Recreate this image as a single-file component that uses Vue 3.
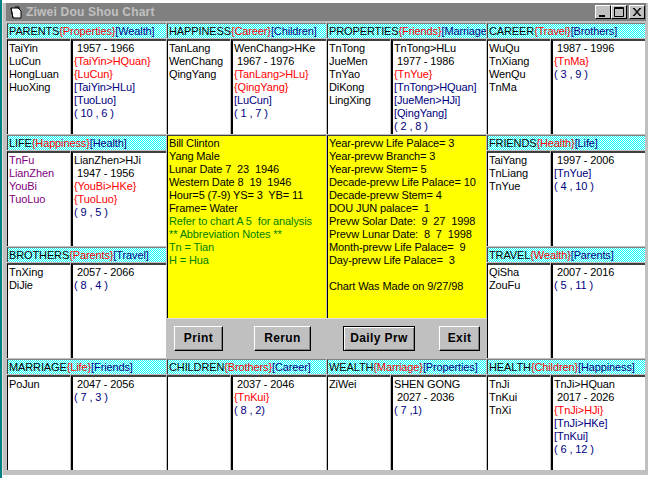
<script setup>
// k = black, r = red, b = navy
const palaces = [
  { name: 'PARENTS', a: 'Properties', b: 'Wealth', stars: ['TaiYin', 'LuCun', 'HongLuan', 'HuoXing'],
    info: [['k', ' 1957 - 1966'], ['r', '{TaiYin>HQuan}'], ['r', '{LuCun}'], ['b', '[TaiYin>HLu]'], ['b', '[TuoLuo]'], ['b', '( 10 , 6 )']] },
  { name: 'HAPPINESS', a: 'Career', b: 'Children', stars: ['TanLang', 'WenChang', 'QingYang'],
    info: [['k', 'WenChang>HKe'], ['k', ' 1967 - 1976'], ['r', '{TanLang>HLu}'], ['r', '{QingYang}'], ['b', '[LuCun]'], ['b', '( 1 , 7 )']] },
  { name: 'PROPERTIES', a: 'Friends', b: 'Marriage', stars: ['TnTong', 'JueMen', 'TnYao', 'DiKong', 'LingXing'],
    info: [['k', 'TnTong>HLu'], ['k', ' 1977 - 1986'], ['r', '{TnYue}'], ['b', '[TnTong>HQuan]'], ['b', '[JueMen>HJi]'], ['b', '[QingYang]'], ['b', '( 2 , 8 )']] },
  { name: 'CAREER', a: 'Travel', b: 'Brothers', stars: ['WuQu', 'TnXiang', 'WenQu', 'TnMa'],
    info: [['k', ' 1987 - 1996'], ['r', '{TnMa}'], ['b', '( 3 , 9 )']] },
  { name: 'LIFE', a: 'Happiness', b: 'Health', self: true, stars: ['TnFu', 'LianZhen', 'YouBi', 'TuoLuo'],
    info: [['k', 'LianZhen>HJi'], ['k', ' 1947 - 1956'], ['r', '{YouBi>HKe}'], ['r', '{TuoLuo}'], ['b', '( 9 , 5 )']] },
  { center: true },
  { name: 'FRIENDS', a: 'Health', b: 'Life', stars: ['TaiYang', 'TnLiang', 'TnYue'],
    info: [['k', ' 1997 - 2006'], ['b', '[TnYue]'], ['b', '( 4 , 10 )']] },
  { name: 'BROTHERS', a: 'Parents', b: 'Travel', stars: ['TnXing', 'DiJie'],
    info: [['k', ' 2057 - 2066'], ['b', '( 8 , 4 )']] },
  { name: 'TRAVEL', a: 'Wealth', b: 'Parents', stars: ['QiSha', 'ZouFu'],
    info: [['k', ' 2007 - 2016'], ['b', '( 5 , 11 )']] },
  { name: 'MARRIAGE', a: 'Life', b: 'Friends', stars: ['PoJun'],
    info: [['k', ' 2047 - 2056'], ['b', '( 7 , 3 )']] },
  { name: 'CHILDREN', a: 'Brothers', b: 'Career', stars: [],
    info: [['k', ' 2037 - 2046'], ['r', '{TnKui}'], ['b', '( 8 , 2)']] },
  { name: 'WEALTH', a: 'Marriage', b: 'Properties', stars: ['ZiWei'],
    info: [['k', 'SHEN GONG'], ['k', ' 2027 - 2036'], ['b', '( 7 ,1)']] },
  { name: 'HEALTH', a: 'Children', b: 'Happiness', stars: ['TnJi', 'TnKui', 'TnXi'],
    info: [['k', 'TnJi>HQuan'], ['k', ' 2017 - 2026'], ['r', '{TnJi>HJi}'], ['b', '[TnJi>HKe]'], ['b', '[TnKui]'], ['b', '( 6 , 12 )']] }
]

const birthInfo = ['Bill Clinton', 'Yang Male', 'Lunar Date 7  23  1946', 'Western Date 8  19  1946', 'Hour=5 (7-9) YS= 3  YB= 11', 'Frame= Water']
const notes = ['Refer to chart A 5  for analysis', '** Abbreviation Notes **', 'Tn = Tian', 'H = Hua']
const preview = [
  'Year-prevw Life Palace= 3', 'Year-prevw Branch= 3', 'Year-prevw Stem= 5', 'Decade-prevw Life Palace= 10',
  'Decade-prevw Stem= 4', 'DOU JUN palace=  1', 'Prevw Solar Date:  9  27  1998', 'Prevw Lunar Date:  8  7  1998',
  'Month-prevw Life Palace=  9', 'Day-prevw Life Palace=  3', ' ', 'Chart Was Made on 9/27/98'
]
</script>

<template>
  <div class="desktop">
    <div class="window">
      <div class="titlebar">
        <svg class="app-icon" width="13" height="13" viewBox="0 0 13 13">
          <path d="M1 2h7l3 3v7H3z" fill="#fff" stroke="#000" />
          <path d="M1 2l2 10M5 1h4v2" fill="none" stroke="#000" />
        </svg>
        <span class="title">Ziwei  Dou Shou Chart</span>
        <div class="win-btns">
          <button class="win-btn">
            <svg width="12" height="10" viewBox="0 0 12 10"><path d="M2 8h6v2H2z" fill="#000" /></svg>
          </button>
          <button class="win-btn">
            <svg width="12" height="10" viewBox="0 0 12 10"><path d="M1.5 .5h9v9h-9zM1 1.5h10" fill="none" stroke="#000" /></svg>
          </button>
          <button class="win-btn close">
            <svg width="12" height="10" viewBox="0 0 12 10"><path d="M2 1l7 8M3 1l7 8M9 1l-7 8M10 1l-7 8" fill="none" stroke="#000" /></svg>
          </button>
        </div>
      </div>

      <div class="chart">
        <template v-for="p in palaces" :key="p.name || 'center'">
          <div v-if="p.center" class="center">
            <div class="panels">
              <div class="panel">
                <div v-for="l in birthInfo" :key="l" class="line">{{ l }}</div>
                <div v-for="l in notes" :key="l" class="line green">{{ l }}</div>
              </div>
              <div class="panel">
                <div v-for="(l, i) in preview" :key="i" class="line">{{ l }}</div>
              </div>
            </div>
            <div class="actions">
              <button class="btn print">Print</button>
              <button class="btn rerun">Rerun</button>
              <button class="btn daily">Daily Prw</button>
              <button class="btn exit">Exit</button>
            </div>
          </div>
          <div v-else class="palace">
            <div class="head">{{ p.name }}<span class="r">{{ '{' + p.a + '}' }}</span><span class="b">[{{ p.b }}]</span></div>
            <div class="body">
              <div class="sub" :class="{ purple: p.self }">
                <div v-for="s in p.stars" :key="s" class="line">{{ s }}</div>
              </div>
              <div class="sub">
                <div v-for="(l, i) in p.info" :key="i" class="line" :class="l[0]">{{ l[1] }}</div>
              </div>
            </div>
          </div>
        </template>
      </div>
    </div>
  </div>
</template>

<style>
html, body {
  margin: 0;
  background: #fff;
}
</style>

<style scoped>
.desktop {
  width: 651px;
  height: 478px;
  overflow: hidden;
  position: relative;
  background: linear-gradient(90deg, #008080 2px, #fff 2px);
  padding-top: 3px;
  box-sizing: border-box;
  font-family: "Liberation Sans", Arial, sans-serif;
  font-size: 11px;
  letter-spacing: -0.12px;
  color: #000;
}

.window {
  margin-left: 2px;
  width: 646px;
  height: 472px;
  background: #c0c0c0;
  padding: 0 2px 0 4px;
  box-sizing: border-box;
  border-left: 1px solid #dfdfdf;
}

.titlebar {
  height: 18px;
  margin-left: -1px;
  background: #808080;
  display: flex;
  align-items: center;
  padding: 0 1px 0 4px;
}

.app-icon {
  flex: none;
}

.title {
  margin-left: 3px;
  color: #c0c0c0;
  font-weight: bold;
  font-size: 12px;
  letter-spacing: 0.2px;
  white-space: pre;
}

.win-btns {
  margin-left: auto;
  display: flex;
}

.win-btn {
  width: 16px;
  height: 14px;
  padding: 0;
  margin: 0;
  display: flex;
  align-items: center;
  justify-content: center;
  background: #c0c0c0;
  border: 1px solid;
  border-color: #fff #000 #000 #fff;
}

.win-btn.close {
  margin-left: 2px;
}

.chart {
  margin-top: 2px;
  display: grid;
  grid-template-columns: 160px 160px 160px 159px;
  grid-template-rows: repeat(4, 112px);
}

.palace {
  display: flex;
  flex-direction: column;
  min-width: 0;
}

/* cyan and white dither, one pixel squares */
.head {
  height: 14px;
  line-height: 14px;
  white-space: nowrap;
  overflow: hidden;
  padding-left: 1px;
  margin-right: 1px;
  border-top: 1px solid #808080;
  border-left: 1px solid #404040;
  background-color: cyan;
  background-image: repeating-conic-gradient(white 0 90deg, cyan 90deg 180deg);
  background-size: 2px 2px;
  image-rendering: pixelated;
}

.r {
  color: #f00;
}

.b {
  color: #000080;
}

.body {
  flex: 1;
  min-height: 0;
  display: grid;
  grid-template-columns: 63px 1fr;
  gap: 1px;
  margin: 1px 1px 1px 0;
}

.sub {
  background: #fff;
  border-top: 2px solid #404040;
  border-left: 1px solid #000;
  padding: 1px 0 0 1px;
  min-width: 0;
  overflow: hidden;
}

.sub + .sub {
  border-left-width: 2px;
}

.line {
  height: 13px;
  line-height: 13px;
  white-space: pre;
}

.purple {
  color: #800080;
}

.k {
  color: #000;
}

.center {
  grid-column: 2 / 4;
  grid-row: 2 / 4;
  display: flex;
  flex-direction: column;
}

.panels {
  height: 183px;
  display: grid;
  grid-template-columns: 160px 160px;
}

.panel {
  background: #ff0;
  border-top: 1px solid #404040;
  border-left: 1px solid #000;
  margin-right: 1px;
  padding: 1px 0 0 1px;
  overflow: hidden;
}

.green {
  color: #008000;
}

.actions {
  flex: 1;
  display: flex;
  align-items: center;
  padding: 0 0 2px 7px;
  border-top: 1px solid #dfdfdf;
}

.btn {
  height: 25px;
  padding: 0;
  font: bold 12px "Liberation Sans", Arial, sans-serif;
  letter-spacing: 0.4px;
  color: #000;
  background: #c0c0c0;
  border: 1px solid;
  border-color: #fff #000 #000 #fff;
  box-shadow: inset -1px -1px 0 #808080;
}

.print {
  width: 49px;
}

.rerun {
  width: 57px;
  margin-left: 31px;
}

.daily {
  width: 72px;
  margin-left: 32px;
  border: 1px solid #000;
  box-shadow: inset 1px 1px 0 #fff, inset -1px -1px 0 #808080, 0 0 0 0 #000;
}

.exit {
  width: 41px;
  margin-left: 24px;
}
</style>
